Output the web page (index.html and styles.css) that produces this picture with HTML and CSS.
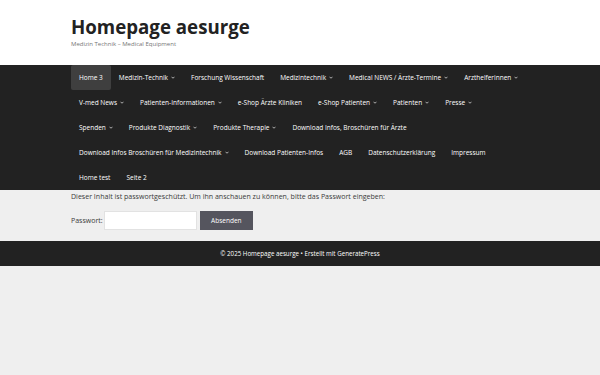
FILE: index.html
```html
<!DOCTYPE html>
<html lang="de">
<head>
  <meta charset="utf-8">
  <title>Homepage aesurge</title>
  <link rel="stylesheet" href="styles.css">
</head>
<body>

  <header class="site-header">
    <div class="inside">
      <p class="site-title">Homepage aesurge</p>
      <p class="site-description">Medizin Technik – Medical Equipment</p>
    </div>
  </header>

  <nav class="main-nav">
    <ul class="menu inside">
      <li class="current"><a href="#">Home 3</a></li>
      <li><a href="#">Medizin-Technik <svg class="caret" viewBox="0 0 8 5"><path d="M1 1l3 3 3-3"/></svg></a></li>
      <li><a href="#">Forschung Wissenschaft</a></li>
      <li><a href="#">Medizintechnik <svg class="caret" viewBox="0 0 8 5"><path d="M1 1l3 3 3-3"/></svg></a></li>
      <li><a href="#">Medical NEWS / Ärzte-Termine <svg class="caret" viewBox="0 0 8 5"><path d="M1 1l3 3 3-3"/></svg></a></li>
      <li><a href="#">Arzthelferinnen <svg class="caret" viewBox="0 0 8 5"><path d="M1 1l3 3 3-3"/></svg></a></li>
      <li><a href="#">V-med News <svg class="caret" viewBox="0 0 8 5"><path d="M1 1l3 3 3-3"/></svg></a></li>
      <li><a href="#">Patienten-Informationen <svg class="caret" viewBox="0 0 8 5"><path d="M1 1l3 3 3-3"/></svg></a></li>
      <li><a href="#">e-Shop Ärzte Kliniken</a></li>
      <li><a href="#">e-Shop Patienten <svg class="caret" viewBox="0 0 8 5"><path d="M1 1l3 3 3-3"/></svg></a></li>
      <li><a href="#">Patienten <svg class="caret" viewBox="0 0 8 5"><path d="M1 1l3 3 3-3"/></svg></a></li>
      <li><a href="#">Presse <svg class="caret" viewBox="0 0 8 5"><path d="M1 1l3 3 3-3"/></svg></a></li>
      <li><a href="#">Spenden <svg class="caret" viewBox="0 0 8 5"><path d="M1 1l3 3 3-3"/></svg></a></li>
      <li><a href="#">Produkte Diagnostik <svg class="caret" viewBox="0 0 8 5"><path d="M1 1l3 3 3-3"/></svg></a></li>
      <li><a href="#">Produkte Therapie <svg class="caret" viewBox="0 0 8 5"><path d="M1 1l3 3 3-3"/></svg></a></li>
      <li><a href="#">Download Infos, Broschüren für Ärzte</a></li>
      <li><a href="#">Download Infos Broschüren für Medizintechnik <svg class="caret" viewBox="0 0 8 5"><path d="M1 1l3 3 3-3"/></svg></a></li>
      <li><a href="#">Download Patienten-Infos</a></li>
      <li><a href="#">AGB</a></li>
      <li><a href="#">Datenschutzerklärung</a></li>
      <li><a href="#">Impressum</a></li>
      <li><a href="#">Home test</a></li>
      <li><a href="#">Seite 2</a></li>
    </ul>
  </nav>

  <main class="content">
    <div class="inside">
      <p>Dieser Inhalt ist passwortgeschützt. Um ihn anschauen zu können, bitte das Passwort eingeben:</p>
      <form class="post-password">
        <label for="pwbox">Passwort:</label>
        <input type="password" id="pwbox" name="post_password">
        <button type="submit" class="btn">Absenden</button>
      </form>
    </div>
  </main>

  <footer class="site-info">
    <div class="inside">© 2025 Homepage aesurge • Erstellt mit GeneratePress</div>
  </footer>

</body>
</html>
```

FILE: styles.css
```css
body {
  margin: 0;
  background: #efefef;
  font-family: "Open Sans", sans-serif;
  color: #3a3a3a;
}

.inside {
  width: 458px;
  margin: 0 auto;
}

/* header */
.site-header {
  background: #fff;
  height: 65px;
}

.site-header .inside {
  padding-top: 16px;
}

.site-title {
  margin: 0;
  font-size: 18.7px;
  font-weight: 700;
  line-height: 22px;
  color: #222;
}

.site-description {
  margin: 1.5px 0 0;
  font-size: 6px;
  line-height: 8px;
  color: #757575;
}

/* navigation */
.main-nav {
  background: #222;
}

.menu {
  display: flex;
  flex-wrap: wrap;
  list-style: none;
  padding: 0;
  margin: 0 auto;
}

.menu a {
  display: flex;
  align-items: center;
  padding: 0 8px;
  line-height: 25px;
  font-size: 6.5px;
  color: #fff;
  text-decoration: none;
}

.menu .current a {
  background: #3f3f3f;
  border-radius: 2px;
}

.caret {
  width: 4px;
  height: 3px;
  margin-left: 3px;
  fill: none;
  stroke: #fff;
  stroke-width: 1.3;
}

/* content */
.content .inside {
  padding-bottom: 11px;
}

.content p {
  margin: 0;
  font-size: 7.05px;
  line-height: 12px;
}

.post-password {
  display: flex;
  align-items: center;
  margin-top: 9px;
  font-size: 7px;
}

.post-password input {
  width: 93px;
  height: 19px;
  box-sizing: border-box;
  margin: 0 3px 0 1px;
  padding: 0 4px;
  border: 1px solid #e2e2e2;
  background: #fff;
}

.btn {
  height: 19px;
  padding: 0 11.5px;
  border: none;
  background: #55555e;
  color: #fff;
  font-family: inherit;
  font-size: 6.5px;
  cursor: pointer;
}

/* footer */
.site-info {
  background: #222;
  color: #fff;
  font-size: 6.2px;
  line-height: 25px;
  text-align: center;
}
```
